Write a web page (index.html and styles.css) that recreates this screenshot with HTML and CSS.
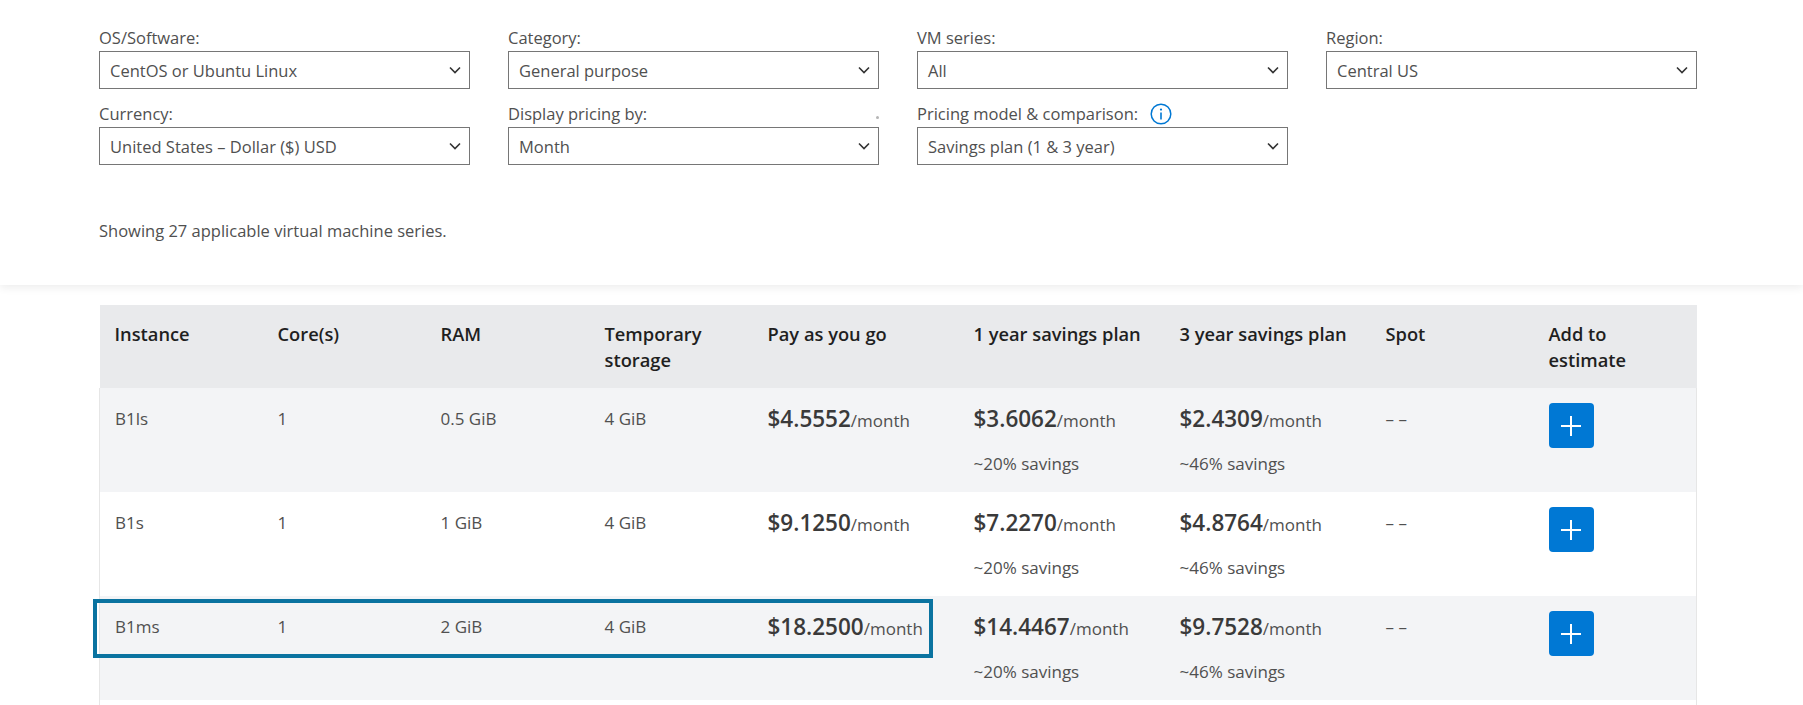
FILE: index.html
```html
<!DOCTYPE html>
<html lang="en">
<head>
<meta charset="utf-8">
<title>Linux Virtual Machines Pricing</title>
<link rel="stylesheet" href="styles.css">
</head>
<body>
<section class="filters">
  <div class="grid">
    <div class="field">
      <div class="lbl">OS/Software:</div>
      <div class="select"><span>CentOS or Ubuntu Linux</span><svg class="chev" viewBox="0 0 12 8" width="12" height="8"><path d="M1 1.5 6 6.5 11 1.5" fill="none" stroke="#333" stroke-width="1.6"/></svg></div>
    </div>
    <div class="field">
      <div class="lbl">Category:</div>
      <div class="select"><span>General purpose</span><svg class="chev" viewBox="0 0 12 8" width="12" height="8"><path d="M1 1.5 6 6.5 11 1.5" fill="none" stroke="#333" stroke-width="1.6"/></svg></div>
    </div>
    <div class="field">
      <div class="lbl">VM series:</div>
      <div class="select"><span>All</span><svg class="chev" viewBox="0 0 12 8" width="12" height="8"><path d="M1 1.5 6 6.5 11 1.5" fill="none" stroke="#333" stroke-width="1.6"/></svg></div>
    </div>
    <div class="field">
      <div class="lbl">Region:</div>
      <div class="select"><span>Central US</span><svg class="chev" viewBox="0 0 12 8" width="12" height="8"><path d="M1 1.5 6 6.5 11 1.5" fill="none" stroke="#333" stroke-width="1.6"/></svg></div>
    </div>
    <div class="field">
      <div class="lbl">Currency:</div>
      <div class="select"><span>United States – Dollar ($) USD</span><svg class="chev" viewBox="0 0 12 8" width="12" height="8"><path d="M1 1.5 6 6.5 11 1.5" fill="none" stroke="#333" stroke-width="1.6"/></svg></div>
    </div>
    <div class="field">
      <div class="lbl">Display pricing by:<span class="dot"></span></div>
      <div class="select"><span>Month</span><svg class="chev" viewBox="0 0 12 8" width="12" height="8"><path d="M1 1.5 6 6.5 11 1.5" fill="none" stroke="#333" stroke-width="1.6"/></svg></div>
    </div>
    <div class="field">
      <div class="lbl">Pricing model &amp; comparison:<svg class="info" viewBox="0 0 22 22" width="22" height="22"><circle cx="11" cy="11" r="9.8" fill="none" stroke="#0078d4" stroke-width="1.5"/><circle cx="11" cy="6.6" r="1.1" fill="#0078d4"/><path d="M11 9.5v7" stroke="#0078d4" stroke-width="1.6"/></svg></div>
      <div class="select"><span>Savings plan (1 &amp; 3 year)</span><svg class="chev" viewBox="0 0 12 8" width="12" height="8"><path d="M1 1.5 6 6.5 11 1.5" fill="none" stroke="#333" stroke-width="1.6"/></svg></div>
    </div>
  </div>
  <p class="showing">Showing 27 applicable virtual machine series.</p>
</section>

<div class="table-wrap">
  <table class="prices">
    <colgroup>
      <col class="c-n"><col class="c-n"><col class="c-n3"><col class="c-n"><col class="c-w"><col class="c-w"><col class="c-w"><col class="c-n"><col class="c-n">
    </colgroup>
    <thead>
      <tr>
        <th>Instance</th><th>Core(s)</th><th>RAM</th><th>Temporary storage</th><th>Pay as you go</th><th>1 year savings plan</th><th>3 year savings plan</th><th>Spot</th><th>Add to estimate</th>
      </tr>
    </thead>
    <tbody>
      <tr>
        <td>B1ls</td><td>1</td><td>0.5 GiB</td><td>4 GiB</td>
        <td><div class="price"><b>$4.5552</b>/month</div></td>
        <td><div class="price"><b>$3.6062</b>/month</div><div class="save">~20% savings</div></td>
        <td><div class="price"><b>$2.4309</b>/month</div><div class="save">~46% savings</div></td>
        <td>– –</td>
        <td class="act"><button class="add" type="button" aria-label="Add to estimate"><svg viewBox="0 0 20 20" width="20" height="20"><path d="M10 0v20M0 10h20" stroke="#fff" stroke-width="2"/></svg></button></td>
      </tr>
      <tr>
        <td>B1s</td><td>1</td><td>1 GiB</td><td>4 GiB</td>
        <td><div class="price"><b>$9.1250</b>/month</div></td>
        <td><div class="price"><b>$7.2270</b>/month</div><div class="save">~20% savings</div></td>
        <td><div class="price"><b>$4.8764</b>/month</div><div class="save">~46% savings</div></td>
        <td>– –</td>
        <td class="act"><button class="add" type="button" aria-label="Add to estimate"><svg viewBox="0 0 20 20" width="20" height="20"><path d="M10 0v20M0 10h20" stroke="#fff" stroke-width="2"/></svg></button></td>
      </tr>
      <tr>
        <td>B1ms</td><td>1</td><td>2 GiB</td><td>4 GiB</td>
        <td><div class="price"><b>$18.2500</b>/month</div></td>
        <td><div class="price"><b>$14.4467</b>/month</div><div class="save">~20% savings</div></td>
        <td><div class="price"><b>$9.7528</b>/month</div><div class="save">~46% savings</div></td>
        <td>– –</td>
        <td class="act"><button class="add" type="button" aria-label="Add to estimate"><svg viewBox="0 0 20 20" width="20" height="20"><path d="M10 0v20M0 10h20" stroke="#fff" stroke-width="2"/></svg></button></td>
      </tr>
      <tr class="tail"><td colspan="9"></td></tr>
    </tbody>
  </table>
  <div class="highlight"></div>
</div>
</body>
</html>
```

FILE: styles.css
```css
* { box-sizing: border-box; }

html, body {
  margin: 0;
  background: #fff;
}

body {
  font-family: "Segoe UI", "Open Sans", sans-serif;
  color: #505050;
  overflow: hidden;
  height: 705px;
}

.filters {
  background: #fff;
  padding: 27px 0 0 99px;
  height: 285px;
  box-shadow: 0 3px 8px rgba(0, 0, 0, 0.07);
  position: relative;
  z-index: 1;
}

.grid {
  display: grid;
  grid-template-columns: repeat(4, 371px);
  column-gap: 38px;
  row-gap: 14px;
}

.field {
  display: flex;
  flex-direction: column;
}

.lbl {
  display: flex;
  align-items: center;
  font-size: 16.5px;
  line-height: 22px;
  height: 22px;
  margin-bottom: 2px;
  color: #505050;
  font-weight: 400;
}

.lbl .dot {
  margin-left: auto;
  margin-right: 0;
  margin-top: 6px;
  width: 3px;
  height: 3px;
  border-radius: 50%;
  background: #b5b5b5;
}

.info {
  margin-left: 12px;
  flex: none;
}

.select {
  height: 38px;
  border: 1px solid #767676;
  display: flex;
  align-items: center;
  justify-content: space-between;
  padding: 0 8px 0 10px;
  font-size: 16.5px;
  color: #505050;
  background: #fff;
}

.chev {
  flex: none;
}

.showing {
  margin: 55px 0 0;
  font-size: 16.5px;
  line-height: 22px;
  color: #505050;
}

.table-wrap {
  position: relative;
  margin: 20px 0 0 99px;
  width: 1597px;
}

.prices {
  width: 1597px;
  border-collapse: collapse;
  table-layout: fixed;
}

.c-n { width: 163px; }
.c-n3 { width: 164px; }
.c-w { width: 206px; }

.prices th {
  background: #e9eaec;
  text-align: left;
  vertical-align: top;
  font-weight: 600;
  font-size: 18.3px;
  line-height: 26px;
  color: #1f1f1f;
  padding: 16px 20px 15px 15px;
}

.prices td {
  vertical-align: top;
  padding: 18px 15px 15px;
  font-size: 17px;
  line-height: 26px;
  color: #505050;
  white-space: nowrap;
}

.prices tbody tr {
  border-left: 1px solid #e6e6e6;
  border-right: 1px solid #e6e6e6;
}

.prices tbody tr:nth-child(odd) { background: #f3f4f6; }
.prices tbody tr:nth-child(even) { background: #fff; }

.prices tbody tr { height: 104px; }
.prices tbody tr.tail { height: 30px; background: #fff; }
.prices tr.tail td { padding: 0; }

.price {
  display: flex;
  align-items: baseline;
  height: 26px;
  font-size: 17px;
  line-height: 26px;
  color: #505050;
}

.price b {
  font-size: 22.5px;
  font-weight: 600;
  line-height: 26px;
  color: #3a3a3a;
}

.save {
  margin-top: 20px;
  line-height: 24px;
  font-size: 17px;
}

.prices td.act {
  padding-top: 15px;
}

.add {
  width: 45px;
  height: 45px;
  border: 0;
  border-radius: 4px;
  background: #0078d4;
  display: flex;
  align-items: center;
  justify-content: center;
  padding: 0;
  cursor: pointer;
}

.highlight {
  position: absolute;
  left: -6px;
  top: 294px;
  width: 840px;
  height: 59px;
  border: 4px solid #0a73a0;
  pointer-events: none;
}
```
